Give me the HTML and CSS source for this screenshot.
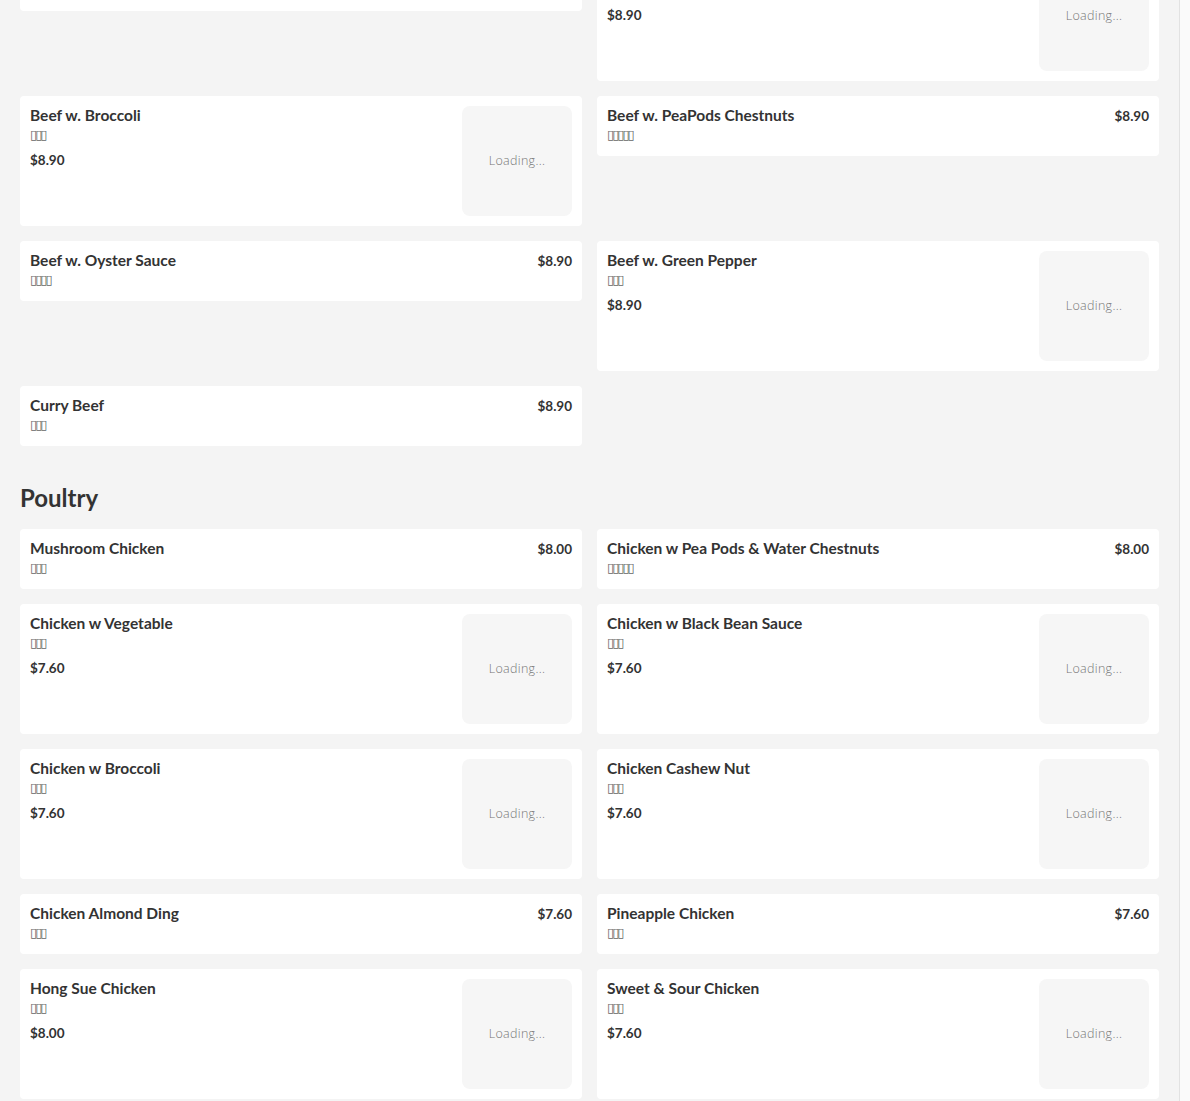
FILE: index.html
```html
<!DOCTYPE html>
<html lang="en">
<head>
<meta charset="utf-8">
<title>Menu</title>
<link rel="stylesheet" href="styles.css">
</head>
<body>
<div class="layout">
  <main class="menu">
    <section class="category category-first">
      <div class="grid">
        <div class="card">
          <div class="info">
            <div class="row"><span class="name">Pepper Steak</span><span class="price">$8.90</span></div>
            <div class="cn">▯▯▯</div>
          </div>
        </div>
        <div class="card has-img">
          <div class="info">
            <div class="name">Beef w. Mushroom</div>
            <div class="cn">▯▯▯</div>
            <div class="price">$8.90</div>
          </div>
          <div class="thumb">Loading...</div>
        </div>
        <div class="card has-img">
          <div class="info">
            <div class="name">Beef w. Broccoli</div>
            <div class="cn">▯▯▯</div>
            <div class="price">$8.90</div>
          </div>
          <div class="thumb">Loading...</div>
        </div>
        <div class="card">
          <div class="info">
            <div class="row"><span class="name">Beef w. PeaPods Chestnuts</span><span class="price">$8.90</span></div>
            <div class="cn">▯▯▯▯▯</div>
          </div>
        </div>
        <div class="card">
          <div class="info">
            <div class="row"><span class="name">Beef w. Oyster Sauce</span><span class="price">$8.90</span></div>
            <div class="cn">▯▯▯▯</div>
          </div>
        </div>
        <div class="card has-img">
          <div class="info">
            <div class="name">Beef w. Green Pepper</div>
            <div class="cn">▯▯▯</div>
            <div class="price">$8.90</div>
          </div>
          <div class="thumb">Loading...</div>
        </div>
        <div class="card">
          <div class="info">
            <div class="row"><span class="name">Curry Beef</span><span class="price">$8.90</span></div>
            <div class="cn">▯▯▯</div>
          </div>
        </div>
      </div>
    </section>

    <section class="category">
      <h2 class="cat-title">Poultry</h2>
      <div class="grid">
        <div class="card">
          <div class="info">
            <div class="row"><span class="name">Mushroom Chicken</span><span class="price">$8.00</span></div>
            <div class="cn">▯▯▯</div>
          </div>
        </div>
        <div class="card">
          <div class="info">
            <div class="row"><span class="name">Chicken w Pea Pods &amp; Water Chestnuts</span><span class="price">$8.00</span></div>
            <div class="cn">▯▯▯▯▯</div>
          </div>
        </div>
        <div class="card has-img">
          <div class="info">
            <div class="name">Chicken w Vegetable</div>
            <div class="cn">▯▯▯</div>
            <div class="price">$7.60</div>
          </div>
          <div class="thumb">Loading...</div>
        </div>
        <div class="card has-img">
          <div class="info">
            <div class="name">Chicken w Black Bean Sauce</div>
            <div class="cn">▯▯▯</div>
            <div class="price">$7.60</div>
          </div>
          <div class="thumb">Loading...</div>
        </div>
        <div class="card has-img">
          <div class="info">
            <div class="name">Chicken w Broccoli</div>
            <div class="cn">▯▯▯</div>
            <div class="price">$7.60</div>
          </div>
          <div class="thumb">Loading...</div>
        </div>
        <div class="card has-img">
          <div class="info">
            <div class="name">Chicken Cashew Nut</div>
            <div class="cn">▯▯▯</div>
            <div class="price">$7.60</div>
          </div>
          <div class="thumb">Loading...</div>
        </div>
        <div class="card">
          <div class="info">
            <div class="row"><span class="name">Chicken Almond Ding</span><span class="price">$7.60</span></div>
            <div class="cn">▯▯▯</div>
          </div>
        </div>
        <div class="card">
          <div class="info">
            <div class="row"><span class="name">Pineapple Chicken</span><span class="price">$7.60</span></div>
            <div class="cn">▯▯▯</div>
          </div>
        </div>
        <div class="card has-img">
          <div class="info">
            <div class="name">Hong Sue Chicken</div>
            <div class="cn">▯▯▯</div>
            <div class="price">$8.00</div>
          </div>
          <div class="thumb">Loading...</div>
        </div>
        <div class="card has-img">
          <div class="info">
            <div class="name">Sweet &amp; Sour Chicken</div>
            <div class="cn">▯▯▯</div>
            <div class="price">$7.60</div>
          </div>
          <div class="thumb">Loading...</div>
        </div>
      </div>
    </section>
  </main>
  <div class="rail"></div>
</div>
</body>
</html>
```

FILE: styles.css
```css
html, body {
  margin: 0;
  padding: 0;
  height: 100%;
  overflow: hidden;
}
body {
  background: #f4f4f4;
  font-family: Lato, "Liberation Sans", sans-serif;
  color: #333;
}
.layout {
  display: flex;
  height: 100%;
}
.menu {
  flex: 1;
  padding: 0 20px;
  min-width: 0;
}
.rail {
  width: 10px;
  background: #fafafa;
  border-left: 1px solid #e2e2e2;
}
.category-first {
  margin-top: -49px;
}
.cat-title {
  margin: 37px 0 16px;
  font-size: 24px;
  line-height: 30px;
  font-weight: 700;
  color: #333;
}
.grid {
  display: grid;
  grid-template-columns: 1fr 1fr;
  column-gap: 15px;
  row-gap: 15px;
  align-items: start;
}
.card {
  background: #fff;
  border-radius: 4px;
  padding: 10px;
  display: flex;
  gap: 12px;
}
.info {
  flex: 1;
  min-width: 0;
}
.row {
  display: flex;
  justify-content: space-between;
  align-items: center;
  height: 19px;
  margin-bottom: 1px;
}
.name {
  font-size: 15.5px;
  font-weight: 700;
  line-height: 19px;
  color: #333;
}
.has-img .name {
  margin-bottom: 1px;
}
.price {
  font-size: 13.5px;
  font-weight: 700;
  line-height: 20px;
  color: #333;
}
.has-img .price {
  margin-top: 4px;
}
.cn {
  height: 20px;
  font-family: "DejaVu Sans", sans-serif;
  font-size: 13px;
  line-height: 18px;
  letter-spacing: -2px;
  color: #666;
}
.thumb {
  width: 110px;
  height: 108px;
  padding-bottom: 2px;
  flex: none;
  border-radius: 8px;
  background: #f6f6f6;
  display: flex;
  align-items: center;
  justify-content: center;
  font-family: "Open Sans", sans-serif;
  font-weight: 300;
  font-size: 12.5px;
  color: #777;
  letter-spacing: 0.3px;
}
```
